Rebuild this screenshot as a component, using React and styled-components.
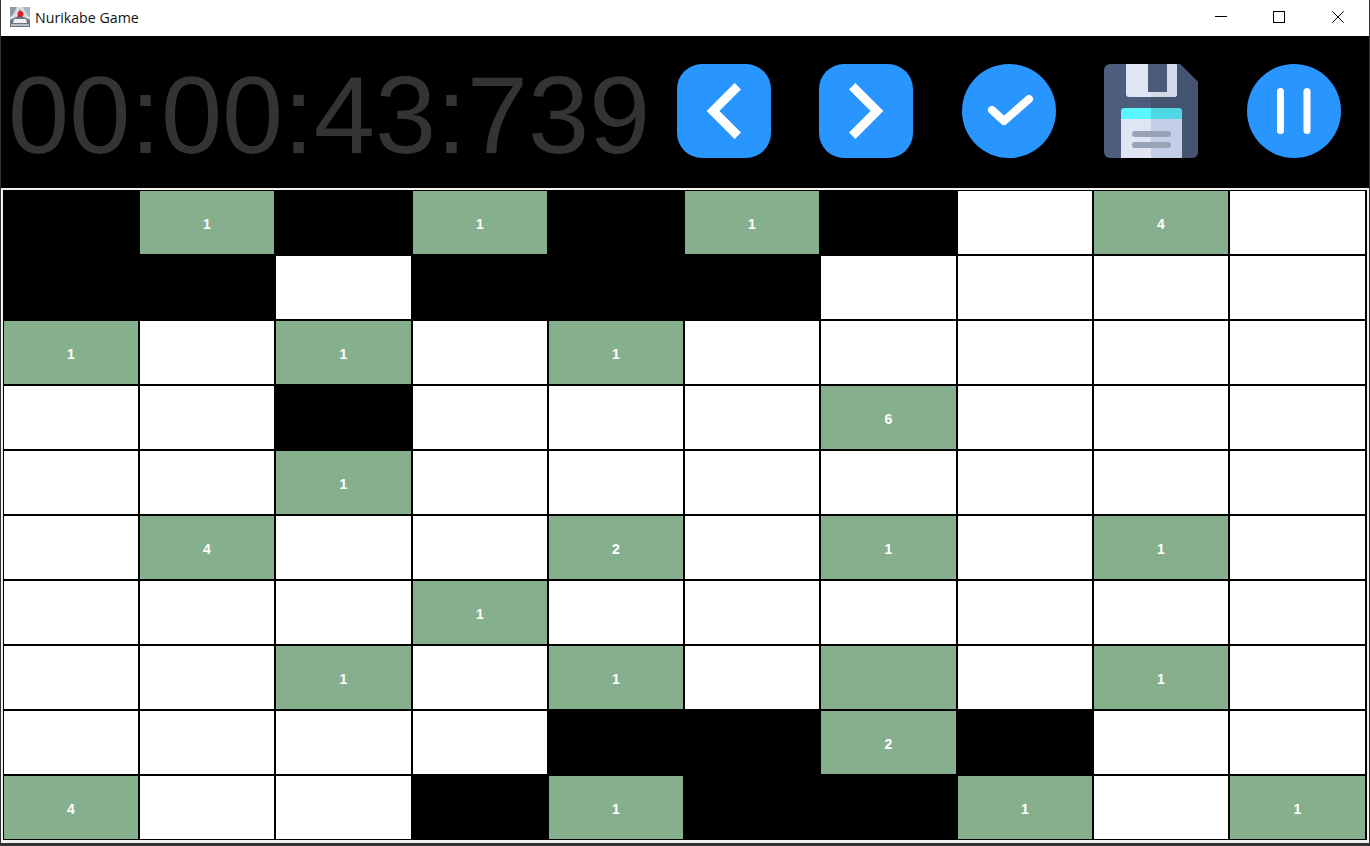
import React from "react";
import styled, { createGlobalStyle } from "styled-components";

const Global = createGlobalStyle`
  html, body { margin: 0; padding: 0; background: #333; overflow: hidden; }
  * { box-sizing: border-box; }
`;

const Win = styled.div`
  width: 1370px; height: 846px; display: flex; flex-direction: column;
  background: #333; padding: 0 1px 3px 1px;
`;
const TitleBar = styled.div`
  height: 36px; background: #fff; display: flex; align-items: center;
  padding: 0 2px 2px 9px; color: #111;
`;
const TitleText = styled.span`
  margin-left: 5px; flex: 1; font-size: 14.2px; font-family: "Open Sans", "Noto Sans", sans-serif;
`;
const WinBtn = styled.div`
  width: ${p => p.$w}px; height: 34px; display: flex; align-items: center; justify-content: center;
`;
const Toolbar = styled.div`
  height: 152px; background: #000; display: flex; align-items: center; padding-left: 6px;
`;
const Timer = styled.div`
  font: 110px "Liberation Sans", Arial, sans-serif; color: #333; width: 670px; line-height: 152px;
  white-space: nowrap; padding: 6px 0 0 1px;
`;
const Tools = styled.div`
  display: flex; gap: 48.4px; align-items: center; margin-top: -2px;
`;
const Icon = styled.svg`
  width: 94px; height: 94px; display: block; flex: none;
`;
const BoardWrap = styled.div`
  flex: 1; background: #f0f0f0; padding: 2px 2px 3px 2px;
`;
const Board = styled.div`
  display: grid;
  grid-template-columns: 134px 134px 135px 134px 134px 134px 135px 134px 134px 135px;
  grid-auto-rows: 63px;
  gap: 2px;
  background: #000;
  padding: 1px 2px 1px 1px;
`;
const Cell = styled.div`
  background: ${p => p.$k === "b" ? "#000" : p.$k === "w" ? "#fff" : "#86b08d"};
  color: #fff; font: bold 14px "Liberation Sans", Arial, sans-serif;
  display: flex; align-items: center; justify-content: center; padding-top: 2px;
`;

const rows = [
  ["b","1","b","1","b","1","b","w","4","w"],
  ["b","b","w","b","b","b","w","w","w","w"],
  ["1","w","1","w","1","w","w","w","w","w"],
  ["w","w","b","w","w","w","6","w","w","w"],
  ["w","w","1","w","w","w","w","w","w","w"],
  ["w","4","w","w","2","w","1","w","1","w"],
  ["w","w","w","1","w","w","w","w","w","w"],
  ["w","w","1","w","1","w","g","w","1","w"],
  ["w","w","w","w","b","b","2","b","w","w"],
  ["4","w","w","b","1","b","b","1","w","1"],
];

const Blue = "#2996ff";

const Prev = () => (
  <Icon viewBox="0 0 94 94">
    <rect width="94" height="94" rx="25" fill={Blue} />
    <path d="M57.600 25.400 L36 47 L57.600 68.600" fill="none" stroke="#fff" strokeWidth="9" strokeLinecap="square" />
  </Icon>
);
const Next = () => (
  <Icon viewBox="0 0 94 94">
    <rect width="94" height="94" rx="25" fill={Blue} />
    <path d="M36.400 25.400 L58 47 L36.400 68.600" fill="none" stroke="#fff" strokeWidth="9" strokeLinecap="square" />
  </Icon>
);
const Check = () => (
  <Icon viewBox="0 0 94 94">
    <circle cx="47" cy="47" r="47" fill={Blue} />
    <path d="M30 46 L42 57 L67 35" fill="none" stroke="#fff" strokeWidth="8" strokeLinecap="round" strokeLinejoin="round" />
  </Icon>
);
const Save = () => (
  <Icon viewBox="0 0 94 94">
    <path d="M6 0 H76 L94 18 V88 a6 6 0 0 1 -6 6 H6 a6 6 0 0 1 -6 -6 V6 a6 6 0 0 1 6 -6Z" fill="#4d5d7c" />
    <path d="M47 0 H76 L94 18 V88 a6 6 0 0 1 -6 6 H47Z" fill="#445370" />
    <path d="M22 0 H73 V30 a3 3 0 0 1 -3 3 H25 a3 3 0 0 1 -3 -3Z" fill="#dfe5f3" />
    <path d="M47 0 H73 V30 a3 3 0 0 1 -3 3 H47Z" fill="#d2d9e9" />
    <rect x="44" y="0" width="19" height="28" fill="#4a5a78" />
    <path d="M17 47 a3 3 0 0 1 3 -3 H47 V55 H17Z" fill="#5af6ff" />
    <path d="M47 44 H75 a3 3 0 0 1 3 3 V55 H47Z" fill="#4ed8e6" />
    <rect x="17" y="55" width="30" height="39" fill="#dfe5f3" />
    <rect x="47" y="55" width="31" height="39" fill="#c3cfe6" />
    <rect x="28" y="67" width="39" height="6" rx="3" fill="#98a3b5" />
    <rect x="28" y="78" width="39" height="6" rx="3" fill="#98a3b5" />
  </Icon>
);
const Pause = () => (
  <Icon viewBox="0 0 94 94">
    <circle cx="47" cy="47" r="47" fill={Blue} />
    <rect x="30" y="24" width="7" height="46" rx="3.500" fill="#fff" />
    <rect x="56.500" y="24" width="7" height="46" rx="3.500" fill="#fff" />
  </Icon>
);

const AppGlyph = () => (
  <svg width="20" height="20" viewBox="0 0 20 20">
    <rect width="20" height="20" fill="#d9dee4" />
    <path d="M0 0H7L3 8L0 10Z" fill="#8d9aa6" />
    <path d="M20 0H13L17 8L20 10Z" fill="#a9b4be" />
    <path d="M7 11 L10 2 L13 11Z" fill="#3c4148" />
    <path d="M0 13 L6 10 H14 L20 13 V20 H0Z" fill="#6c747c" />
    <path d="M4 12 H16 L17 16 H3Z" fill="#eef0f2" />
    <rect x="1" y="17" width="18" height="2" fill="#b4bbc2" />
    <circle cx="10.500" cy="7" r="3" fill="#d8232a" />
  </svg>
);

export default function App() {
  return (
    <Win>
      <Global />
      <TitleBar>
        <AppGlyph />
        <TitleText>Nurikabe Game</TitleText>
        <WinBtn $w={56}>
          <svg width="12" height="12" viewBox="0 0 12 12"><path d="M0 5.500H12" stroke="#000" /></svg>
        </WinBtn>
        <WinBtn $w={60}>
          <svg width="12" height="12" viewBox="0 0 12 12"><rect x=".5" y=".5" width="11" height="11" fill="none" stroke="#000" /></svg>
        </WinBtn>
        <WinBtn $w={58}>
          <svg width="12" height="12" viewBox="0 0 12 12"><path d="M.3 .3L11.700 11.700M11.700 .3L.3 11.700" stroke="#000" /></svg>
        </WinBtn>
      </TitleBar>
      <Toolbar>
        <Timer>00:00:43:739</Timer>
        <Tools>
          <Prev /><Next /><Check /><Save /><Pause />
        </Tools>
      </Toolbar>
      <BoardWrap>
        <Board>
          {rows.flat().map((k, i) => (
            <Cell key={i} $k={/\d/.test(k) ? "g" : k}>{/\d/.test(k) ? k : ""}</Cell>
          ))}
        </Board>
      </BoardWrap>
    </Win>
  );
}
